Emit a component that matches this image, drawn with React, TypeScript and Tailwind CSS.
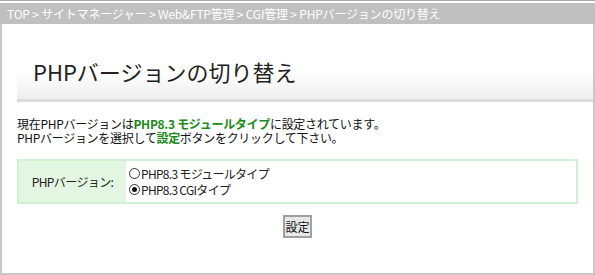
import React from "react";

export default function App() {
  const font = { fontFamily: '"Noto Sans CJK JP", "Noto Sans", sans-serif' };
  return (
    <div className="w-[595px] h-[275px] bg-white relative overflow-hidden" style={font}>
      <div className="h-[3px] border-t border-[#a8a8a8] bg-white" />
      <div className="h-[21px] bg-[#c0c0c0] flex items-center pl-[7px] text-white text-[12px] leading-none tracking-[-0.2px] whitespace-nowrap">
        TOP &gt; サイトマネージャー &gt; Web&amp;FTP管理 &gt; CGI管理 &gt; PHPバージョンの切り替え
      </div>
      <div className="h-[251px] border-l-2 border-r-2 border-b-2 border-[#c8c8c8] flex flex-col">
        <div className="ml-[15px] mt-[20px] h-[58px] bg-gradient-to-b from-white from-50% to-[#eeeeee] border-b-[3px] border-[#dcdcdc] flex items-center pl-[16px] pb-[2px]">
          <span className="text-[22px] text-[#222] leading-none">PHPバージョンの切り替え</span>
        </div>
        <div className="ml-[15px] mt-[15px] text-[12px] leading-[14px] text-[#111] tracking-[-0.3px] whitespace-nowrap">
          <div>
            現在PHPバージョンは<span className="font-bold text-[#1a8a1a]">PHP8.3 モジュールタイプ</span>に設定されています。
          </div>
          <div>
            PHPバージョンを選択して<span className="font-bold text-[#1a8a1a]">設定</span>ボタンをクリックして下さい。
          </div>
        </div>
        <div className="ml-[15px] mt-[14px] w-[561px] h-[45px] border-2 border-[#d2f0d2] flex">
          <div className="w-[107px] bg-[#e2f6e2] flex items-center justify-center text-[12px] text-[#222] tracking-[-0.6px]">
            PHPバージョン:
          </div>
          <div className="flex-1 bg-white flex flex-col justify-center pl-[3px] text-[12px] leading-[16px] text-[#222] tracking-[-0.7px] whitespace-nowrap">
            <div className="flex items-center">
              <span className="inline-block w-[11px] h-[11px] rounded-full border border-[#333] mr-[1px]" />
              PHP8.3 モジュールタイプ
            </div>
            <div className="flex items-center">
              <span className="w-[11px] h-[11px] rounded-full border border-[#333] mr-[1px] flex items-center justify-center">
                <span className="w-[5px] h-[5px] rounded-full bg-[#111]" />
              </span>
              PHP8.3 CGIタイプ
            </div>
          </div>
        </div>
        <div className="ml-[15px] w-[561px] flex justify-center mt-[11px]">
          <button className="w-[29px] h-[23px] p-0 border-2 border-[#a0a0a0] bg-[#e8e8e8] text-[12px] text-[#111] leading-none whitespace-nowrap flex items-center justify-center">
            設定
          </button>
        </div>
      </div>
    </div>
  );
}
